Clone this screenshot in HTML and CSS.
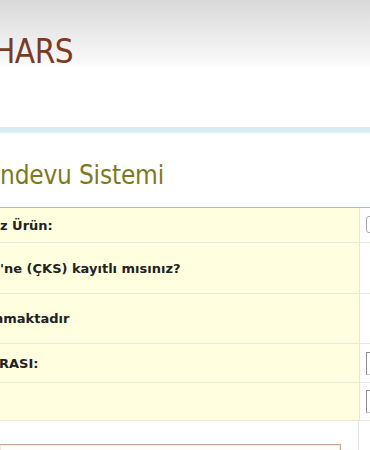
FILE: index.html
```html
<!DOCTYPE html>
<html lang="tr">
<head>
    <meta charset="UTF-8">
    <meta name="viewport" content="width=device-width, initial-scale=1.0">
    <title>Randevu Sistemi</title>
    <link rel="stylesheet" href="styles.css">
</head>
<body>
    <div class="ust-baslik">
        <div class="logo-yazi">HARS</div>
    </div>
    <div class="mavi-serit"></div>
    <div class="icerik">
        <h1 class="sayfa-baslik">ndevu Sistemi</h1>
        <div class="form-tablo">
            <div class="satir satir-1">
                <div class="etiket">z Ürün:</div>
                <div class="alan"><span class="secim"></span></div>
            </div>
            <div class="satir satir-2">
                <div class="etiket">'ne (ÇKS) kayıtlı mısınız?</div>
                <div class="alan"></div>
            </div>
            <div class="satir satir-3">
                <div class="etiket kesik">nmaktadır</div>
                <div class="alan"></div>
            </div>
            <div class="satir satir-4">
                <div class="etiket kesik-r">RASI:</div>
                <div class="alan"><span class="kutu"></span></div>
            </div>
            <div class="satir satir-5">
                <div class="etiket"></div>
                <div class="alan"><span class="kutu"></span></div>
            </div>
            <div class="satir satir-bos">
                <div class="etiket bos">
                    <div class="bilgi-kutu"></div>
                </div>
                <div class="alan"></div>
            </div>
        </div>
    </div>
</body>
</html>
```

FILE: styles.css
```css
body {
    margin: 0;
    padding: 0;
    background-color: #ffffff;
    font-family: "DejaVu Sans", Verdana, sans-serif;
    overflow: hidden;
}
.ust-baslik {
    height: 127px;
    background: linear-gradient(#d9d9d9 0, #f6f6f6 58px, #ffffff 68px);
    box-sizing: border-box;
    padding-top: 33px;
}
.logo-yazi {
    font-family: "DejaVu Sans Condensed", "DejaVu Sans", sans-serif;
    font-size: 33px;
    line-height: 38px;
    color: #7b3b22;
    margin-left: -7px;
    letter-spacing: -0.5px;
}
.mavi-serit {
    height: 6px;
    border-top: 1px solid #e3e7ef;
    background: linear-gradient(#d6ebf2 0, #d9edf2 4px, #ffffff 6px);
}
.icerik {
    padding-top: 26px;
}
.sayfa-baslik {
    margin: 0 0 17px 0;
    font-family: "DejaVu Sans Condensed", "DejaVu Sans", sans-serif;
    font-weight: normal;
    font-size: 26px;
    line-height: 30px;
    letter-spacing: -0.2px;
    color: #7d7a1e;
}
.form-tablo {
    border-top: 1px solid #a6bfd7;
}
.satir {
    display: flex;
    box-sizing: border-box;
    border-bottom: 1px solid #e9e9d6;
}
.satir-1 { height: 35px; }
.satir-2 { height: 51px; }
.satir-3 { height: 50px; }
.satir-4 { height: 39px; }
.satir-5 { height: 38px; }
.satir-bos { height: 40px; border-bottom: none; }
.etiket {
    width: 359px;
    flex-shrink: 0;
    background-color: #ffffe0;
    border-right: 1px solid #e6e6e0;
    display: flex;
    align-items: center;
    font-weight: bold;
    font-size: 13px;
    color: #222222;
}
.etiket.kesik {
    margin-left: -6px;
    width: 365px;
}
.etiket.kesik-r {
    margin-left: -1px;
    width: 360px;
}
.etiket.bos {
    background-color: #ffffff;
    align-items: flex-start;
    padding-top: 23px;
    box-sizing: border-box;
}
.alan {
    flex: 1;
    display: flex;
    align-items: center;
    padding-left: 6px;
}
.secim {
    display: block;
    width: 20px;
    height: 15px;
    border: 1px solid #a8a8a8;
    border-radius: 3px;
    margin-top: -1px;
}
.kutu {
    display: block;
    width: 20px;
    height: 21px;
    border: 1px solid #c4c4c4;
    border-top-color: #8c8c8c;
    border-left-color: #8c8c8c;
    margin-left: 0;
}
.bilgi-kutu {
    width: 340px;
    height: 20px;
    margin-left: -1px;
    border: 1px solid #c8a796;
    box-shadow: inset 0 0 0 1px #f3e6de;
    background-color: #fffdf9;
}
```
